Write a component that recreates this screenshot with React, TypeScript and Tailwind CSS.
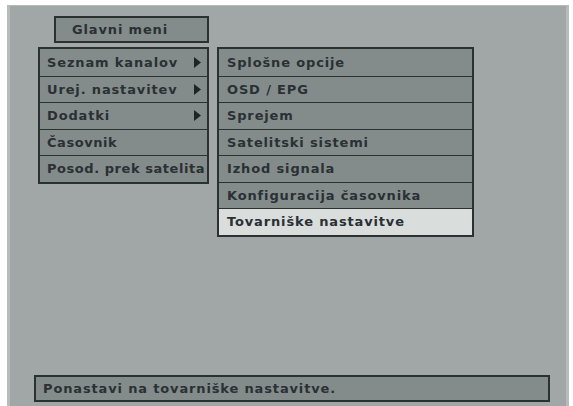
const font = { fontFamily: '"DejaVu Sans", Verdana, sans-serif' }

const mainItems = [
  { label: "Seznam kanalov", arrow: true },
  { label: "Urej. nastavitev", arrow: true },
  { label: "Dodatki", arrow: true },
  { label: "Časovnik", arrow: false },
  { label: "Posod. prek satelita", arrow: false },
]

const subItems = [
  "Splošne opcije",
  "OSD / EPG",
  "Sprejem",
  "Satelitski sistemi",
  "Izhod signala",
  "Konfiguracija časovnika",
  "Tovarniške nastavitve",
]

function Arrow() {
  return (
    <svg width="7" height="11" viewBox="0 0 7 11" className="shrink-0">
      <path d="M0 0 L7 5.5 L0 11 Z" fill="#1f2427" />
    </svg>
  )
}

export default function App() {
  return (
    <div
      className="w-[573px] h-[406px] bg-white pt-[5px] pl-[7px] pr-[4px] overflow-hidden"
      style={font}
    >
      <div className="h-full flex flex-col bg-[#a1a7a6] border-l-[3px] border-r-[3px] border-t border-[#b7bcbb] text-[#2a3034] text-[13px] font-bold tracking-[0.85px]">
        <div className="ml-[44px] mt-[10px] w-[155px] h-[27px] border-2 border-[#2b3130] bg-[#848c8b] flex items-center pl-[16px] leading-none">
          Glavni meni
        </div>

        <div className="flex items-start mt-[4px] ml-[28px] gap-[8px]">
          <div className="w-[171px] border-2 border-[#2b3130] bg-[#2b3130] flex flex-col">
            {mainItems.map((it, i) => (
              <div
                key={it.label}
                className={`h-[26.5px] flex items-center pl-[7px] bg-[#848c8b] whitespace-nowrap leading-none ${
                  i > 0 ? "border-t border-[#2b3130]" : ""
                } ${it.arrow ? "pr-[6px]" : "pr-0 tracking-[0.55px]"}`}
              >
                <span className="flex-1">{it.label}</span>
                {it.arrow && <Arrow />}
              </div>
            ))}
          </div>

          <div className="w-[257px] border-2 border-[#2b3130] flex flex-col">
            {subItems.map((label, i) => (
              <div
                key={label}
                className={`h-[26.5px] flex items-center pl-[8px] whitespace-nowrap leading-none ${
                  i > 0 ? "border-t border-[#2b3130]" : ""
                } ${i === subItems.length - 1 ? "bg-[#d9dddc]" : "bg-[#848c8b]"}`}
              >
                {label}
              </div>
            ))}
          </div>
        </div>

        <div className="mt-auto mb-[4px] ml-[24px] w-[516px] h-[27px] border-2 border-[#2b3130] bg-[#848c8b] flex items-center pl-[7px] leading-none">
          Ponastavi na tovarniške nastavitve.
        </div>
      </div>
    </div>
  )
}
